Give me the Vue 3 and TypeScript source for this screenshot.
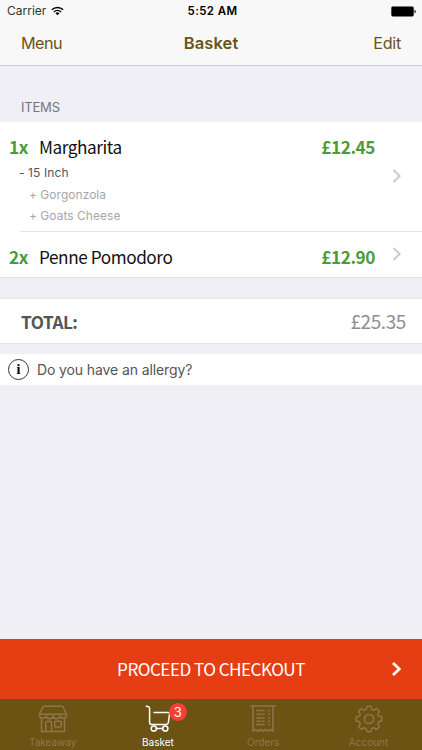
<script setup lang="ts">
interface BasketItem {
  qty: string
  name: string
  price: string
  size?: string
  extras: string[]
}

const items: BasketItem[] = [
  { qty: '1x', name: 'Margharita', price: '£12.45', size: '- 15 Inch', extras: ['+ Gorgonzola', '+ Goats Cheese'] },
  { qty: '2x', name: 'Penne Pomodoro', price: '£12.90', extras: [] },
]

function buildGear(teeth: number, outer: number, inner: number): string {
  const step = (Math.PI * 2) / teeth
  const at = (r: number, a: number) => `${(15 + r * Math.sin(a)).toFixed(2)} ${(15 - r * Math.cos(a)).toFixed(2)}`
  let d = `M${at(outer, -0.12)}`
  for (let i = 0; i < teeth; i++) {
    const a = i * step
    d += `L${at(outer, a + 0.12)}Q${at(outer, a + 0.18)} ${at(outer - 0.9, a + 0.2)}`
    d += `Q${at(inner + 0.1, a + 0.22)} ${at(inner, a + 0.33)}`
    d += `Q${at(inner - 0.5, a + step / 2)} ${at(inner, a + step - 0.33)}`
    d += `Q${at(inner + 0.1, a + step - 0.22)} ${at(outer - 0.9, a + step - 0.2)}`
    d += `Q${at(outer, a + step - 0.18)} ${at(outer, a + step - 0.12)}`
  }
  return d + 'Z'
}

const gear = buildGear(8, 12.9, 10)
</script>

<template>
  <div class="screen">
    <header class="top">
      <div class="status">
        <div class="carrier">
          <span class="carrier-name">Carrier</span>
          <svg class="wifi" width="13" height="10" viewBox="0 0 13 10" fill="none" stroke="#000">
            <path d="M.8 3.7a8.2 8.2 0 0 1 11.4 0" stroke-width="1.5" />
            <path d="M2.9 5.9a5.2 5.2 0 0 1 7.2 0" stroke-width="1.4" />
            <path d="M6.5 9.3 4.5 7.3a2.9 2.9 0 0 1 4 0z" fill="#000" stroke="none" />
          </svg>
        </div>
        <span class="clock">5:52 AM</span>
        <svg class="battery" width="26" height="11" viewBox="0 0 26 11">
          <rect x=".3" y=".5" width="22.4" height="10" rx="1.4" />
          <path d="M23.5 3.7c1.6.3 1.6 3.3 0 3.6z" />
        </svg>
      </div>
      <nav class="nav">
        <span class="menu">Menu</span>
        <span class="title">Basket</span>
        <span class="edit">Edit</span>
      </nav>
    </header>

    <main class="content">
      <h2 class="section">ITEMS</h2>
      <ul class="items">
        <li v-for="item in items" :key="item.name" class="item">
          <div class="line">
            <span class="qty">{{ item.qty }}</span>
            <span class="name">{{ item.name }}</span>
            <span class="price">{{ item.price }}</span>
          </div>
          <div v-if="item.size" class="options">
            <p class="size">{{ item.size }}</p>
            <p v-for="extra in item.extras" :key="extra" class="extra">{{ extra }}</p>
          </div>
          <svg class="chevron" width="10" height="14" viewBox="0 0 10 14">
            <path d="m1.5 1 6.2 6-6.2 6" fill="none" stroke="#c7c7cc" stroke-width="1.8" />
          </svg>
        </li>
      </ul>
      <div class="total">
        <span class="total-label">TOTAL:</span>
        <span class="total-price">£25.35</span>
      </div>
      <div class="allergy">
        <span class="info">i</span>
        <span class="question">Do you have an allergy?</span>
      </div>
    </main>

    <div class="checkout">
      <span class="checkout-label">PROCEED TO CHECKOUT</span>
      <svg class="go" width="12" height="16" viewBox="0 0 12 16">
        <path d="m2 2 6.3 6L2 14" fill="none" stroke="#fff" stroke-width="2.7" />
      </svg>
    </div>

    <footer class="tabs">
      <div class="tab">
        <svg class="icon" width="30" height="30" viewBox="0 0 30 30">
          <path d="M5.2 2.2h19.6l3.7 8H1.5zM1.5 10.2v1.6a3.4 2.9 0 0 0 6.7 0 3.4 2.9 0 0 0 6.8 0 3.4 2.9 0 0 0 6.8 0 3.4 2.9 0 0 0 6.7 0v-1.6M3.5 15v12.4h23V15M7.8 27.4v-8.2a2 2 0 0 1 2-2h1.7a2 2 0 0 1 2 2v8.2" />
          <rect x="16.7" y="17.2" width="6.6" height="5.8" rx="1" />
        </svg>
        <span>Takeaway</span>
      </div>
      <div class="tab active">
        <svg class="icon" width="30" height="30" viewBox="0 0 30 30">
          <path d="M3.2 2.2l1.8.4q1.6.4 1.6 2v14q0 1.8 1.8 1.8h14.7q1.8 0 2.3-1.8l1.1-8.4q.2-1.8-1.6-1.8H11" />
          <circle cx="10.8" cy="24.5" r="2.6" />
          <circle cx="22.3" cy="24.5" r="2.6" />
          <path d="M13.4 24.5h6.3" />
        </svg>
        <span class="badge">3</span>
        <span>Basket</span>
      </div>
      <div class="tab">
        <svg class="icon" width="30" height="30" viewBox="0 0 30 30">
          <path d="M2.7 2h24.8M5 2v25.3l2.5-1.9 2.5 1.9 2.5-1.9 2.5 1.9 2.5-1.9 2.5 1.9 2.5-1.9 2.5 1.9V2" />
          <path d="M9 6.5h7M9 10.2h3.5M14.5 10.2H16M9 13.9h7M9 17.2h3M14 17.2h2M9 20.5h7M20.5 6.5h1M20.5 10.2h1M20.5 13.9h1M20.5 17.2h1M20.5 20.5h1" />
        </svg>
        <span>Orders</span>
      </div>
      <div class="tab">
        <svg class="icon" width="30" height="30" viewBox="0 0 30 30">
          <path :d="gear" />
          <circle cx="15" cy="15" r="4.6" />
        </svg>
        <span>Account</span>
      </div>
    </footer>
  </div>
</template>

<style>
body {
  margin: 0;
  background: #efeff5;
}
</style>

<style scoped>
.screen {
  display: flex;
  flex-direction: column;
  width: 422px;
  height: 750px;
  overflow: hidden;
  background: #efeff5;
  font-family: Inter, "Liberation Sans", sans-serif;
  white-space: nowrap;
}
.top {
  box-sizing: border-box;
  height: 66px;
  background: #f8f8f8;
  border-bottom: 1px solid #cdcdd2;
}
.status,
.nav {
  display: grid;
  grid-template-columns: 1fr auto 1fr;
  align-items: center;
}
.status {
  height: 22px;
  padding: 0 5px 0 7px;
  font-size: 12px;
  line-height: 22px;
  color: #000;
}
.carrier {
  display: flex;
  align-items: center;
  gap: 5px;
}
.carrier-name { color: #333; }
.clock { padding-left: 1px; font-weight: 600; font-size: 11.5px; letter-spacing: .4px; }
.battery { justify-self: end; }
.nav {
  height: 43px;
  padding: 0 21px;
  font-size: 16.2px;
  line-height: 43px;
  color: #6b5316;
}
.menu { letter-spacing: -.5px; }
.title { font-size: 16.5px; font-weight: 600; letter-spacing: .1px; }
.edit { justify-self: end; letter-spacing: -.3px; }
.content { flex: 1; }
.section {
  margin: 0;
  padding: 31px 21px 0;
  height: 25px;
  font-size: 13px;
  font-weight: 400;
  line-height: 20px;
  letter-spacing: -.2px;
  color: #76767b;
}
.items {
  margin: 0;
  padding: 0;
  list-style: none;
  background: #fff;
  border-bottom: 1px solid #e2e2e6;
}
.item {
  position: relative;
  box-sizing: border-box;
  height: 45px;
}
.item:first-child { height: 110px; }
.item:first-child::after {
  content: "";
  display: block;
  height: 1px;
  margin: 4px 0 0 20px;
  background: #e3e3e6;
}
.line {
  display: grid;
  grid-template-columns: 30px 1fr auto;
  padding: 10px 47px 0 9px;
  font-family: "Noto Sans CJK SC", sans-serif;
  font-size: 17.2px;
  line-height: 30px;
  letter-spacing: -.43px;
}
.qty, .price { color: #4b9b37; font-weight: 700; }
.name { color: #111; }
.options { font-size: 12px; letter-spacing: .03px; }
.options p { margin: 0; line-height: 21.5px; }
.size { padding-left: 19px; color: #555; letter-spacing: .1px; }
.extra { padding-left: 29px; color: #a7a7a7; }
.chevron {
  position: absolute;
  right: 20px;
  top: 15px;
}
.item:first-child .chevron { top: 47px; }
.total {
  display: flex;
  justify-content: space-between;
  box-sizing: border-box;
  height: 46px;
  margin-top: 20px;
  padding: 0 16px 0 21px;
  background: #fff;
  border-top: 1px solid #e6e6ea;
  border-bottom: 1px solid #e2e2e6;
  font-family: "Noto Sans CJK SC", sans-serif;
  font-size: 17.2px;
  line-height: 45px;
  letter-spacing: -.5px;
}
.total-label { font-weight: 700; color: #555; }
.total-price { color: #8e8e93; font-size: 19px; line-height: 43px; letter-spacing: -.4px; }
.allergy {
  display: flex;
  align-items: center;
  gap: 8px;
  height: 31px;
  margin-top: 10px;
  padding-left: 8px;
  background: #fff;
}
.info {
  box-sizing: border-box;
  width: 21px;
  height: 21px;
  border: 1px solid #333;
  border-radius: 50%;
  font: 700 14px/19px "Liberation Serif", serif;
  text-align: center;
  color: #000;
}
.question { font-size: 14px; letter-spacing: -.11px; color: #555; }
.checkout {
  display: flex;
  align-items: center;
  height: 60px;
  padding-right: 19px;
  background: #e63e13;
  color: #fff;
}
.checkout-label {
  flex: 1;
  padding-left: 31px;
  font-family: "Noto Sans CJK SC", sans-serif;
  font-size: 17.2px;
  line-height: 60px;
  letter-spacing: -.57px;
  text-align: center;
}
.tabs {
  display: grid;
  grid-template-columns: repeat(4, 105.3px);
  height: 51px;
  background: #6c5314;
  color: #8c774a;
}
.tab {
  position: relative;
  display: flex;
  flex-direction: column;
  align-items: center;
  padding-top: 5px;
  font-size: 10px;
  line-height: 12px;
}
.active { color: #fff; }
.icon {
  flex: none;
  margin-bottom: 2px;
  fill: none;
  stroke: currentColor;
  stroke-width: 1.5;
  stroke-linejoin: round;
  stroke-linecap: round;
}
.badge {
  position: absolute;
  left: 63.5px;
  top: 4px;
  width: 18px;
  height: 18px;
  border-radius: 50%;
  background: #fc3d39;
  font-size: 13px;
  line-height: 18px;
  text-align: center;
}
</style>
